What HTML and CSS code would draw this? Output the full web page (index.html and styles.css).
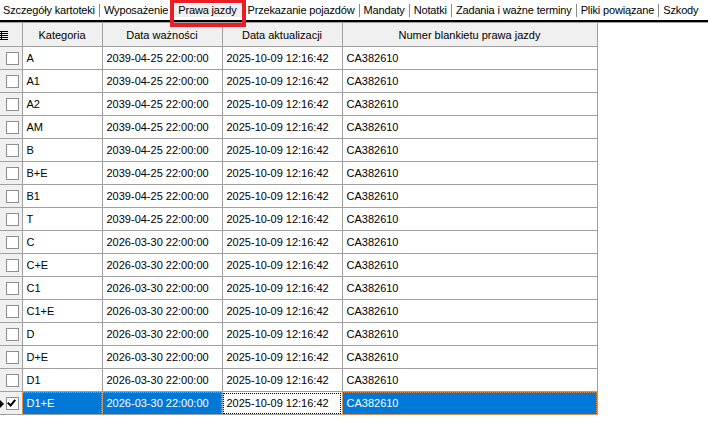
FILE: index.html
```html
<!DOCTYPE html>
<html lang="pl">
<head>
    <meta charset="UTF-8">
    <title>Prawa jazdy</title>
    <link rel="stylesheet" href="styles.css">
</head>
<body>
    <div class="tabs">
        <span class="tab">Szczegóły kartoteki</span>
        <span class="tab">Wyposażenie</span>
        <span class="tab active">Prawa jazdy</span>
        <span class="tab">Przekazanie pojazdów</span>
        <span class="tab">Mandaty</span>
        <span class="tab">Notatki</span>
        <span class="tab">Zadania i ważne terminy</span>
        <span class="tab">Pliki powiązane</span>
        <span class="tab">Szkody</span>
    </div>
    <div class="tabs-under"></div>

    <table class="grid">
        <colgroup>
            <col class="c-rh">
            <col class="c-kat">
            <col class="c-date">
            <col class="c-date">
            <col class="c-num">
        </colgroup>
        <thead>
            <tr>
                <th class="rh">
                    <svg class="all-icon" width="8" height="9" viewBox="0 0 8 9">
                        <rect x="0" y="0" width="8" height="1" fill="#000"/>
                        <rect x="0" y="2" width="8" height="1" fill="#000"/>
                        <rect x="0" y="4" width="8" height="1" fill="#000"/>
                        <rect x="0" y="6" width="8" height="1" fill="#000"/>
                        <rect x="0" y="8" width="8" height="1" fill="#000"/>
                        <rect x="1" y="0" width="1" height="9" fill="#000"/>
                    </svg>
                </th>
                <th>Kategoria</th>
                <th>Data ważności</th>
                <th>Data aktualizacji</th>
                <th>Numer blankietu prawa jazdy</th>
            </tr>
        </thead>
        <tbody id="rows"></tbody>
    </table>

    <script>
        const kategorie = [
            ['A', '2039-04-25 22:00:00'],
            ['A1', '2039-04-25 22:00:00'],
            ['A2', '2039-04-25 22:00:00'],
            ['AM', '2039-04-25 22:00:00'],
            ['B', '2039-04-25 22:00:00'],
            ['B+E', '2039-04-25 22:00:00'],
            ['B1', '2039-04-25 22:00:00'],
            ['T', '2039-04-25 22:00:00'],
            ['C', '2026-03-30 22:00:00'],
            ['C+E', '2026-03-30 22:00:00'],
            ['C1', '2026-03-30 22:00:00'],
            ['C1+E', '2026-03-30 22:00:00'],
            ['D', '2026-03-30 22:00:00'],
            ['D+E', '2026-03-30 22:00:00'],
            ['D1', '2026-03-30 22:00:00'],
            ['D1+E', '2026-03-30 22:00:00']
        ];

        const tbody = document.getElementById('rows');
        kategorie.forEach((k, i) => {
            const last = i === kategorie.length - 1;
            const row = document.createElement('tr');
            if (last) row.className = 'selected';
            row.innerHTML = `
                <td class="rh">${last ? '<span class="arrow"></span>' : ''}<span class="check${last ? ' on' : ''}"></span></td>
                <td>${k[0]}</td>
                <td>${k[1]}</td>
                <td class="${last ? 'current' : ''}">2025-10-09 12:16:42</td>
                <td>CA382610</td>
            `;
            tbody.appendChild(row);
        });
    </script>
</body>
</html>
```
FILE: styles.css
```css
body {
    margin: 0;
    font-family: "Liberation Sans", Arial, sans-serif;
    font-size: 11px;
    color: #000;
    background: #fff;
}
.tabs {
    display: flex;
    height: 20px;
    align-items: center;
    border-bottom: 2px solid #000;
    white-space: nowrap;
    letter-spacing: -0.15px;
}
.tab {
    padding: 0 4px;
    line-height: 13px;
    border-left: 1px solid #8a8a8a;
}
.tab:first-child {
    border-left: none;
    padding-left: 3px;
}
.tab.active {
    position: relative;
    background: #f0f0f0;
    border-left: none;
    padding: 0 10px 0 6px;
}
.tab.active::after {
    content: "";
    position: absolute;
    left: -2px;
    right: 0;
    top: -5px;
    bottom: -10px;
    border: 4px solid #ec1c24;
}
.tab.active + .tab {
    border-left: none;
    padding-left: 1px;
}
.tabs-under {
    height: 1px;
    background: #a0a0a0;
}
.grid {
    width: 597px;
    table-layout: fixed;
    border-collapse: collapse;
}
.c-rh { width: 22px; }
.c-kat { width: 80px; }
.c-date { width: 120px; }
.c-num { width: 255px; }
th, td {
    border: 1px solid #a0a0a0;
    padding: 0 4px;
    white-space: nowrap;
    overflow: hidden;
}
th {
    height: 23px;
    background: #f0f0f0;
    font-weight: normal;
    text-align: center;
    border-top: none;
}
td {
    height: 22px;
    text-align: left;
}
th:first-child, td:first-child {
    border-left: none;
}
.rh {
    background: #f0f0f0;
    padding: 0;
    position: relative;
    text-align: left;
}
.all-icon {
    display: block;
    margin: 1px 0 0 0;
}
.check {
    display: block;
    width: 11px;
    height: 11px;
    margin-left: 6px;
    border: 1px solid #8e8e8e;
    background: #fff;
    position: relative;
}
.check.on::after {
    content: "";
    position: absolute;
    left: 2px;
    top: 0;
    width: 3px;
    height: 6px;
    border: solid #000;
    border-width: 0 2px 2px 0;
    transform: rotate(40deg);
}
.arrow {
    position: absolute;
    left: 0;
    top: 8px;
    width: 0;
    height: 0;
    border-top: 4px solid transparent;
    border-bottom: 4px solid transparent;
    border-left: 4px solid #000;
}
tr.selected td {
    background: #0078d7;
    color: #fff;
    outline: 1px dotted #d8904a;
    outline-offset: -1px;
}
tr.selected td.rh {
    background: #f0f0f0;
    outline: none;
}
tr.selected td.current {
    background: #fff;
    color: #000;
    outline: 1px dotted #000;
    outline-offset: -2px;
}
```
